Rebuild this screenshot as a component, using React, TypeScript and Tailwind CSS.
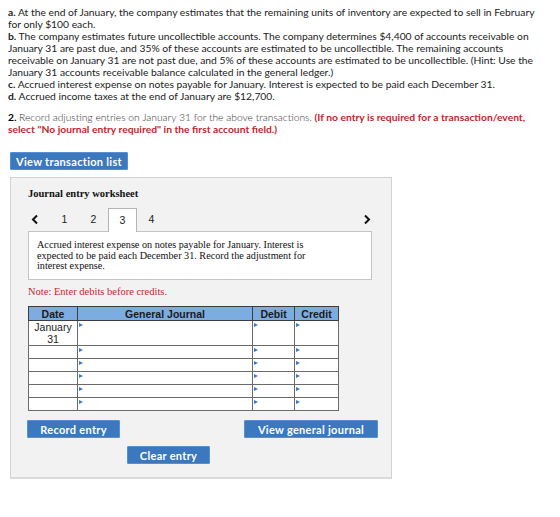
import React from "react";

const sans = { fontFamily: "Lato, 'Open Sans', Arial, sans-serif" };
const serif = { fontFamily: "'Liberation Serif', 'Times New Roman', serif" };
const arial = { fontFamily: "'Liberation Sans', Arial, sans-serif" };

function Marker() {
  return (
    <span className="absolute left-[1px] top-[2px] w-0 h-0 border-l-[4px] border-l-[#3a78c8] border-y-[2px] border-y-transparent" />
  );
}

function Chevron({ dir }: { dir: "left" | "right" }) {
  return (
    <svg width="8" height="11" viewBox="0 0 8 11" className="block">
      <polyline
        points={dir === "left" ? "6,1.5 2,5.5 6,9.5" : "2,1.5 6,5.5 2,9.5"}
        fill="none"
        stroke="#111"
        strokeWidth="2"
      />
    </svg>
  );
}

function BlueButton({ label, className = "" }: { label: string; className?: string }) {
  return (
    <button
      className={
        "h-[18px] bg-[#3c78bd] border border-[#5a8fcf] text-white font-bold text-[11px] leading-none tracking-[0.3px] rounded-[1px] " +
        className
      }
      style={sans}
    >
      {label}
    </button>
  );
}

function Row({ tall = false, date }: { tall?: boolean; date?: React.ReactNode }) {
  const h = tall ? "h-[24px]" : "h-[13px]";
  return (
    <tr className={h}>
      <td className="border border-[#6b6b6b] bg-white text-center align-top text-[10.5px] leading-[12px] text-[#222]">
        {date}
      </td>
      <td className="relative border border-[#6b6b6b] bg-white">
        <Marker />
      </td>
      <td className="relative border border-[#6b6b6b] bg-white">
        <Marker />
      </td>
      <td className="relative border border-[#6b6b6b] bg-white">
        <Marker />
      </td>
    </tr>
  );
}

export default function App() {
  return (
    <div className="w-[560px] h-[517px] bg-white overflow-hidden text-[#222]">
      <div className="pl-[8px] pr-[12px] pt-[6px] text-[10.3px] leading-[12px]" style={sans}>
        <p>
          <b>a.</b> At the end of January, the company estimates that the remaining units of inventory are expected to sell in February for only $100 each.
        </p>
        <p>
          <b>b.</b> The company estimates future uncollectible accounts. The company determines $4,400 of accounts receivable on January 31 are past due, and 35% of these accounts are estimated to be uncollectible. The remaining accounts receivable on January 31 are not past due, and 5% of these accounts are estimated to be uncollectible. (Hint: Use the January 31 accounts receivable balance calculated in the general ledger.)
        </p>
        <p>
          <b>c.</b> Accrued interest expense on notes payable for January. Interest is expected to be paid each December 31.
        </p>
        <p>
          <b>d.</b> Accrued income taxes at the end of January are $12,700.
        </p>
        <p className="mt-[9px]">
          <b className="text-black">2.</b>{" "}
          <span className="font-light text-[#333]">Record adjusting entries on January 31 for the above transactions.</span>{" "}
          <b className="text-[#c1272d]">
            (If no entry is required for a transaction/event, select "No journal entry required" in the first account field.)
          </b>
        </p>
      </div>

      <div className="flex pl-[10px] pt-[17px]">
        <BlueButton label="View transaction list" className="w-[118px]" />
      </div>

      <div className="ml-[10px] mt-[7px] w-[382px] h-[302px] bg-[#f2f2f2] border border-[#d2d2d2] border-b-2 border-b-[#dadada] pl-[17px] pr-[20px] pt-[10px]">
        <h2 className="font-bold text-[10.5px] leading-[12px] text-[#111]" style={serif}>
          Journal entry worksheet
        </h2>

        <div className="mt-[8px] flex items-center h-[23px]">
          <div className="w-[22px] pl-[3px] flex items-center">
            <Chevron dir="left" />
          </div>
          <div className="flex h-full" style={arial}>
            {["1", "2", "3", "4"].map((n) => (
              <div
                key={n}
                className={
                  "w-[29px] flex items-center justify-center text-[10.5px] text-[#222] " +
                  (n === "3"
                    ? "bg-white border border-b-0 border-[#b4b4b4] relative z-10 h-[24px] self-start"
                    : "h-full")
                }
              >
                {n}
              </div>
            ))}
          </div>
          <div className="ml-auto flex items-center">
            <Chevron dir="right" />
          </div>
        </div>

        <div className="w-[344px] h-[49px] bg-white border border-[#c4c4c4] pl-[8px] pt-[8px]">
          <p className="w-[280px] text-[10.2px] leading-[10.5px] text-[#111]" style={serif}>
            Accrued interest expense on notes payable for January. Interest is expected to be paid each December 31. Record the adjustment for interest expense.
          </p>
        </div>

        <p className="mt-[6px] text-[10.5px] leading-[12px] text-[#c3282e]" style={serif}>
          Note: Enter debits before credits.
        </p>

        <table className="mt-[8px] w-[310px] border-collapse table-fixed" style={arial}>
          <colgroup>
            <col className="w-[49px]" />
            <col className="w-[175px]" />
            <col className="w-[42px]" />
            <col className="w-[44px]" />
          </colgroup>
          <thead>
            <tr className="h-[14px] bg-[#7cade2]">
              {["Date", "General Journal", "Debit", "Credit"].map((h) => (
                <th
                  key={h}
                  className="border border-[#3d3d3d] text-[10.5px] leading-[12px] font-bold text-[#1a1a1a] p-0"
                >
                  {h}
                </th>
              ))}
            </tr>
          </thead>
          <tbody>
            <Row
              tall
              date={
                <>
                  January
                  <br />
                  31
                </>
              }
            />
            <Row />
            <Row />
            <Row />
            <Row />
            <Row />
          </tbody>
        </table>

        <div className="mt-[9px] w-[351px] -ml-[1px] flex justify-between">
          <BlueButton label="Record entry" className="w-[93px]" />
          <BlueButton label="View general journal" className="w-[134px]" />
        </div>
        <div className="flex mt-[8px] ml-[99px]">
          <BlueButton label="Clear entry" className="w-[83px] h-[17px]" />
        </div>
      </div>
    </div>
  );
}
